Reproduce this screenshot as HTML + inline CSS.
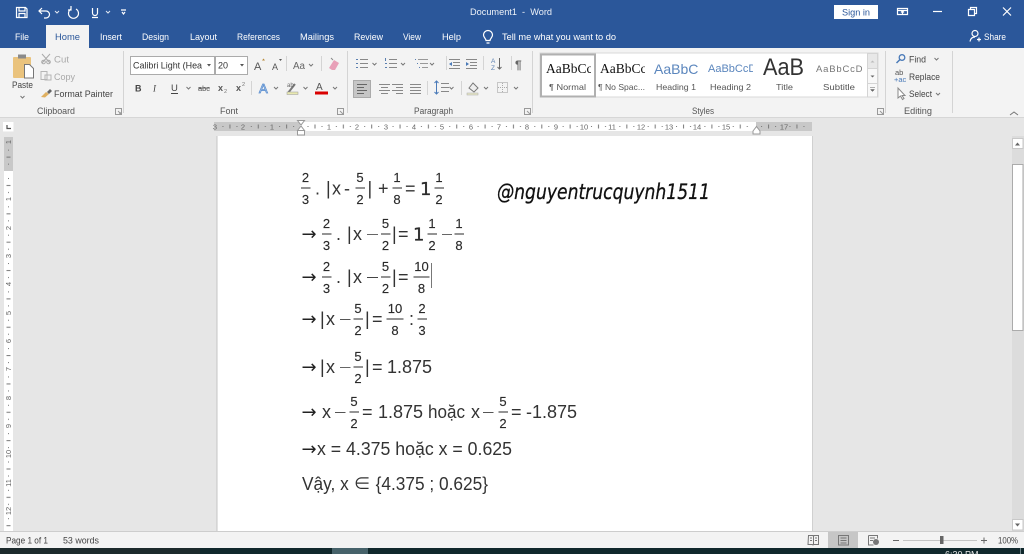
<!DOCTYPE html>
<html lang="en"><head><meta charset="utf-8"><title>Document1 - Word</title>
<style>
html,body{margin:0;padding:0;width:1024px;height:554px;overflow:hidden;background:#e6e6e6}
svg{display:block;position:absolute;left:0;top:0}
text{font-family:"Liberation Sans","Noto Sans CJK SC",sans-serif;white-space:pre}
.w{fill:#fff;font-size:9.5px}
.tb{fill:#eef2f8;font-size:9px}
.r{fill:#444;font-size:9px}
.g{fill:#a9a9a9;font-size:9px}
.l{fill:#555;font-size:9px}
.sn{fill:#555;font-size:8.5px}
.rn{fill:#666;font-size:7.5px;text-anchor:middle}
.m{fill:#333;font-size:18px}
.a{fill:#222;font-size:18px;font-family:"DejaVu Sans",sans-serif}
.o{fill:#2a2a2a;font-size:18px;font-family:"DejaVu Sans",sans-serif;stroke:#2a2a2a;stroke-width:.3}
.f{fill:#2a2a2a;font-size:13px;text-anchor:middle;stroke:#2a2a2a;stroke-width:.15}
.ic{fill:none;stroke:#666;stroke-width:1}
.ch{fill:none;stroke:#777;stroke-width:1}
.wi{fill:none;stroke:#fff;stroke-width:1.2}
.bar{fill:#2a2a2a}
</style></head><body>
<svg width="1024" height="554" viewBox="0 0 1024 554" xmlns="http://www.w3.org/2000/svg">
<defs>
<pattern id="hr" width="28.35" height="9" patternUnits="userSpaceOnUse" patternTransform="translate(300.5 122)">
<rect x="7" y="4" width="1" height="1" fill="#777"/><rect x="14" y="2.5" width="1" height="4" fill="#777"/><rect x="21" y="4" width="1" height="1" fill="#777"/>
</pattern>
<pattern id="vr" width="9" height="28.35" patternUnits="userSpaceOnUse" patternTransform="translate(4 171)">
<rect x="4" y="7" width="1" height="1" fill="#777"/><rect x="2.5" y="14" width="4" height="1" fill="#777"/><rect x="4" y="21" width="1" height="1" fill="#777"/>
</pattern>
</defs>

<!-- title bar -->
<rect width="1024" height="48" fill="#2b579a"/>
<path class="wi" d="M16.5 7.5h9l1.5 1.5v8.5h-10.500zM19 7.500v3.500h6v-3.500M19 17.500v-4h6v4"/>
<path class="wi" d="M42 8l-3 3 3 3M39 11h7a3.500 3.500 0 0 1 0 7h-2"/>
<path class="ch" style="stroke:#dfe6f1" d="M55 11l2 2 2-2M106 11l2 2 2-2"/>
<path class="wi" d="M71 9a5 5 0 1 0 5 0M71 6v4h-3"/>
<path class="wi" d="M92.500 8v5a2.500 2.500 0 0 0 5 0v-5M92 17.500h6"/>
<path class="wi" d="M121 10h5M122 12l1.500 2 1.500-2"/>
<text class="tb" x="470" y="15" textLength="82" lengthAdjust="spacingAndGlyphs">Document1  -  Word</text>
<rect x="834" y="5" width="44" height="14" fill="#fff"/>
<text x="842" y="15.500" font-size="9" fill="#2b579a" textLength="28" lengthAdjust="spacingAndGlyphs">Sign in</text>
<path class="wi" stroke-width="1" d="M897.500 8.500h10v6h-10zM897.500 10.500h10M902.500 11v3M901 12.500l1.500-1.500 1.500 1.500"/>
<path class="wi" d="M933 11.500h9"/>
<path class="wi" d="M968.500 9.500h6v6h-6zM970.500 9.500v-2h6v6h-2"/>
<path class="wi" d="M1003 7.500l8 8M1011 7.500l-8 8"/>

<!-- tabs -->
<rect x="46" y="25" width="43" height="23" fill="#f3f3f3"/>
<text class="w" x="15" y="40" textLength="14" lengthAdjust="spacingAndGlyphs">File</text>
<text x="55" y="40" font-size="9.500" fill="#2b579a" textLength="25" lengthAdjust="spacingAndGlyphs">Home</text>
<text class="w" x="100" y="40" textLength="22" lengthAdjust="spacingAndGlyphs">Insert</text>
<text class="w" x="142" y="40" textLength="27" lengthAdjust="spacingAndGlyphs">Design</text>
<text class="w" x="190" y="40" textLength="27" lengthAdjust="spacingAndGlyphs">Layout</text>
<text class="w" x="237" y="40" textLength="43" lengthAdjust="spacingAndGlyphs">References</text>
<text class="w" x="300" y="40" textLength="34" lengthAdjust="spacingAndGlyphs">Mailings</text>
<text class="w" x="354" y="40" textLength="29" lengthAdjust="spacingAndGlyphs">Review</text>
<text class="w" x="403" y="40" textLength="18" lengthAdjust="spacingAndGlyphs">View</text>
<text class="w" x="442" y="40" textLength="19" lengthAdjust="spacingAndGlyphs">Help</text>
<path class="wi" stroke-width="1" d="M486 40.500c0-2-2.500-3-2.500-5.500a4.500 4.500 0 0 1 9 0c0 2.500-2.500 3.500-2.500 5.500zM486.500 43h3"/>
<text class="w" x="502" y="40" textLength="114" lengthAdjust="spacingAndGlyphs">Tell me what you want to do</text>
<circle class="wi" cx="975" cy="33.500" r="3" stroke-width="1"/>
<path class="wi" stroke-width="1" d="M970 41.500c.5-3 2-4.500 5-4.500M977 39.500h4M979 37.500v4"/>
<text class="w" x="984" y="40" textLength="22" lengthAdjust="spacingAndGlyphs">Share</text>

<!-- ribbon -->
<rect y="48" width="1024" height="69" fill="#f3f3f3"/>
<rect y="117" width="1024" height="1" fill="#d6d6d6"/>
<g fill="#d4d4d4">
<rect x="123" y="51" width="1" height="62"/><rect x="347" y="51" width="1" height="62"/><rect x="532" y="51" width="1" height="62"/><rect x="885" y="51" width="1" height="62"/><rect x="952" y="51" width="1" height="62"/>
</g>
<!-- clipboard -->
<rect x="13" y="57" width="18" height="21" rx="1" fill="#eac37d"/>
<rect x="18" y="54.500" width="8" height="4" fill="#8a8a8a"/>
<path d="M24.500 64.500h5l4 4v9.500h-9z" fill="#fff" stroke="#777"/>
<text class="r" x="12" y="88" textLength="21" lengthAdjust="spacingAndGlyphs">Paste</text>
<path class="ch" d="M20.500 96l2 2 2-2"/>
<path d="M42 54l8 9M50 54l-8 9" stroke="#aaa" fill="none"/><circle cx="43.500" cy="62" r="1.800" fill="none" stroke="#aaa"/><circle cx="48.500" cy="62" r="1.800" fill="none" stroke="#aaa"/>
<text class="g" x="54" y="62.500" textLength="15" lengthAdjust="spacingAndGlyphs">Cut</text>
<path d="M41 71.500h6v8h-6zM45 75h6v5h-6z" fill="none" stroke="#b5b5b5"/>
<text class="g" x="54" y="80" textLength="21" lengthAdjust="spacingAndGlyphs">Copy</text>
<path d="M41 97l5-5 3 2-4 3.500z" fill="#e0b060"/><path d="M47 92l3-3 2 2-3 3z" fill="#666"/>
<text class="r" x="54" y="97" textLength="59" lengthAdjust="spacingAndGlyphs">Format Painter</text>
<text class="l" x="37" y="114" textLength="38" lengthAdjust="spacingAndGlyphs">Clipboard</text>
<path class="ic" d="M115.500 108.500h6v6h-6zM118 111l3 3M121 112v2h-2" style="stroke:#999"/>

<!-- font -->
<rect x="130.500" y="56.500" width="84" height="18" fill="#fff" stroke="#ababab"/>
<text x="133" y="68.500" font-size="9" fill="#333" textLength="69" lengthAdjust="spacingAndGlyphs">Calibri Light (Hea</text>
<path d="M207 64h4l-2 2.500z" fill="#555"/>
<rect x="215.500" y="56.500" width="32" height="18" fill="#fff" stroke="#ababab"/>
<text x="218" y="68.500" font-size="9" fill="#333">20</text>
<path d="M240 64h4l-2 2.500z" fill="#555"/>
<text x="254" y="70" font-size="11" fill="#555">A</text><path d="M262 60.500l1.500-2 1.500 2z" fill="#b88a3a"/>
<text x="272" y="70" font-size="9" fill="#555">A</text><path d="M279 59l1.500 2 1.500-2z" fill="#555"/>
<rect x="286" y="56" width="1" height="15" fill="#d4d4d4"/>
<text x="293" y="69" font-size="10" fill="#666" textLength="12" lengthAdjust="spacingAndGlyphs">Aa</text>
<path class="ch" d="M309 64l2 2 2-2"/>
<rect x="321" y="56" width="1" height="15" fill="#d4d4d4"/>
<path d="M329 68l5-8 5 3-4 7h-3z" fill="#e8a0b8"/><path d="M331 58l2 2" stroke="#888"/>
<text x="135" y="91.500" font-size="9" font-weight="bold" fill="#444">B</text>
<text x="153" y="91.500" font-size="9" font-style="italic" fill="#444" style="font-family:'Liberation Serif',serif">I</text>
<text x="171" y="91" font-size="9.500" fill="#444">U</text><rect x="171" y="93" width="7" height="1" fill="#444"/>
<path class="ch" d="M186.500 87l2 2 2-2"/>
<text x="198" y="91" font-size="7.500" fill="#555" textLength="12" lengthAdjust="spacingAndGlyphs">abc</text><rect x="198" y="87.500" width="12" height="1" fill="#666"/>
<text x="218" y="91" font-size="9" font-weight="bold" fill="#555">x</text><text x="224" y="93" font-size="5.500" fill="#777">2</text>
<text x="236" y="91" font-size="9" font-weight="bold" fill="#555">x</text><text x="242" y="86" font-size="5.500" fill="#777">2</text>
<rect x="251" y="81" width="1" height="14" fill="#d4d4d4"/>
<text x="259" y="93" font-size="13" fill="#dbe6f5" stroke="#5b8fd0" stroke-width=".8">A</text>
<path class="ch" d="M274 87l2 2 2-2"/>
<path d="M288 93l7-9" stroke="#777" stroke-width="2" fill="none"/><text x="287" y="87" font-size="6" fill="#666">ab</text>
<rect x="287" y="92" width="11" height="2.500" fill="#e8e8b0" stroke="#999" stroke-width=".5"/>
<path class="ch" d="M303.500 87l2 2 2-2"/>
<text x="316" y="90" font-size="10" fill="#555">A</text><rect x="315" y="91.500" width="13" height="3" fill="#d90000"/>
<path class="ch" d="M333 87l2 2 2-2"/>
<text class="l" x="220" y="114" textLength="18" lengthAdjust="spacingAndGlyphs">Font</text>
<path class="ic" d="M337.500 108.500h6v6h-6zM340 111l3 3" style="stroke:#999"/>

<!-- paragraph -->
<g class="ic">
<path d="M360 59.500h8M360 63.500h8M360 67.500h8" style="stroke:#888"/><path d="M356 59.500h2M356 63.500h2M356 67.500h2" style="stroke:#5a7fb0"/>
<path d="M389 59.500h8M389 63.500h8M389 67.500h8" style="stroke:#888"/><path d="M385.500 58v3M385 63.500h2M385 67.500h2" style="stroke:#5a7fb0"/>
<path d="M418 59.500h10M420 63.500h8M422 67.500h6" style="stroke:#999"/><path d="M415 59.500h1M417 63.500h1M419 67.500h1" style="stroke:#5a7fb0"/>
<path d="M449 59.500h11M453 62.500h7M453 65.500h7M449 68.500h11" style="stroke:#888"/>
<path d="M466 59.500h11M470 62.500h7M470 65.500h7M466 68.500h11" style="stroke:#888"/>
</g>
<path d="M452 62l-3 2 3 2z" fill="#4a7ab8"/><path d="M466 62l3 2-3 2z" fill="#4a7ab8"/>
<path class="ch" d="M372.500 63l2 2 2-2M401 63l2 2 2-2M430 63l2 2 2-2"/>
<rect x="446" y="56" width="1" height="14" fill="#d4d4d4"/><rect x="483" y="56" width="1" height="14" fill="#d4d4d4"/><rect x="511" y="56" width="1" height="14" fill="#d4d4d4"/>
<text x="491" y="63" font-size="6.500" fill="#5a7fb0">A</text><text x="491" y="70" font-size="6.500" fill="#5a7fb0">Z</text>
<path d="M499.500 58v11M497.500 67l2 2 2-2" fill="none" stroke="#666"/>
<text x="515" y="69" font-size="12" font-weight="bold" fill="#666">¶</text>
<rect x="353.500" y="80.500" width="17" height="17" fill="#c6c6c6" stroke="#aaa"/>
<path d="M357 84.500h10M357 87.500h7M357 90.500h10M357 93.500h7" stroke="#666" fill="none"/>
<path d="M379 84.500h11M381 87.500h7M379 90.500h11M381 93.500h7M392 84.500h11M396 87.500h7M392 90.500h11M396 93.500h7M410 84.500h11M410 87.500h11M410 90.500h11M410 93.500h11" stroke="#888" fill="none"/>
<rect x="427" y="81" width="1" height="14" fill="#d4d4d4"/><rect x="461" y="81" width="1" height="14" fill="#d4d4d4"/>
<path d="M436.500 81v13M434.500 83l2-2 2 2M434.500 92l2 2 2-2" fill="none" stroke="#4a7ab8"/>
<path d="M441 83.500h8M441 87.500h8M441 91.500h8" stroke="#888" fill="none"/>
<path class="ch" d="M449.500 87l2 2 2-2"/>
<path d="M469 88l4-5 5 5-4 4z" fill="#eee" stroke="#777"/><rect x="467" y="93" width="11" height="2" fill="#e8e8c8" stroke="#aaa" stroke-width=".5"/>
<path class="ch" d="M484 87l2 2 2-2M514 87l2 2 2-2"/>
<rect x="497.500" y="82.500" width="10" height="10" fill="none" stroke="#999" stroke-dasharray="1 1"/>
<path d="M502.500 83v10M498 87.500h10" stroke="#aaa" stroke-dasharray="1 1"/>
<text class="l" x="414" y="114" textLength="39" lengthAdjust="spacingAndGlyphs">Paragraph</text>
<path class="ic" d="M524.500 108.500h6v6h-6zM527 111l3 3" style="stroke:#999"/>

<!-- styles -->
<rect x="540" y="53" width="338" height="44" fill="#fff" stroke="#d8d8d8"/>
<rect x="541" y="54.500" width="54" height="42" fill="#fff" stroke="#b0b0b0" stroke-width="2"/>
<svg x="545" y="58" width="46" height="20"><text x="1" y="15" font-size="13.500" style="font-family:'Liberation Serif',serif" fill="#111">AaBbCc</text></svg>
<svg x="600" y="58" width="45" height="20"><text x="0" y="15" font-size="13.500" style="font-family:'Liberation Serif',serif" fill="#111">AaBbCc</text></svg>
<svg x="654" y="58" width="45" height="20"><text x="0" y="16" font-size="14" fill="#5b86bd">AaBbCc</text></svg>
<svg x="708" y="58" width="45" height="20"><text x="0" y="14" font-size="11" fill="#5b86bd">AaBbCcDd</text></svg>
<svg x="762" y="57" width="45" height="24"><text x="1" y="18" font-size="24" fill="#333" textLength="41" lengthAdjust="spacingAndGlyphs">AaB</text></svg>
<svg x="816" y="58" width="46" height="20"><text x="0" y="14" font-size="9.500" letter-spacing=".8" fill="#777">AaBbCcDd</text></svg>
<text class="sn" x="549" y="90" textLength="37" lengthAdjust="spacingAndGlyphs">¶ Normal</text>
<text class="sn" x="598" y="90" textLength="47" lengthAdjust="spacingAndGlyphs">¶ No Spac...</text>
<text class="sn" x="656" y="90" textLength="40" lengthAdjust="spacingAndGlyphs">Heading 1</text>
<text class="sn" x="710" y="90" textLength="41" lengthAdjust="spacingAndGlyphs">Heading 2</text>
<text class="sn" x="776" y="90" textLength="17" lengthAdjust="spacingAndGlyphs">Title</text>
<text class="sn" x="823" y="90" textLength="32" lengthAdjust="spacingAndGlyphs">Subtitle</text>
<rect x="867.500" y="53.500" width="10" height="15" fill="#e8e8e8" stroke="#d4d4d4"/>
<rect x="867.500" y="68.500" width="10" height="15" fill="#f8f8f8" stroke="#d4d4d4"/>
<rect x="867.500" y="83.500" width="10" height="13.500" fill="#f8f8f8" stroke="#d4d4d4"/>
<path d="M870.500 62.500l2-2 2 2z" fill="#bbb"/><path d="M870.500 75.500h4l-2 2z" fill="#666"/>
<path d="M870 87.500h5M870.500 89.500h4l-2 2z" fill="#666" stroke="#666" stroke-width=".5"/>
<text class="l" x="692" y="114" textLength="22" lengthAdjust="spacingAndGlyphs">Styles</text>
<path class="ic" d="M877.500 108.500h6v6h-6zM880 111l3 3" style="stroke:#999"/>

<!-- editing -->
<circle cx="902" cy="57.500" r="2.800" fill="none" stroke="#4a7ab8" stroke-width="1.300"/><path d="M900 59.500l-3.500 3.500" stroke="#4a7ab8" stroke-width="1.500"/>
<text class="r" x="909" y="62.500" textLength="17" lengthAdjust="spacingAndGlyphs">Find</text>
<path class="ch" d="M934.500 58l2 2 2-2"/>
<text x="895" y="75" font-size="7.500" fill="#555">ab</text><text x="894" y="82" font-size="7.500" fill="#4a7ab8">+ac</text>
<text class="r" x="909" y="80" textLength="31" lengthAdjust="spacingAndGlyphs">Replace</text>
<path d="M898 88v10l2.500-2 2 3.500 1.500-1-2-3h3z" fill="#fff" stroke="#888"/>
<text class="r" x="909" y="97" textLength="23" lengthAdjust="spacingAndGlyphs">Select</text>
<path class="ch" d="M936 93l2 2 2-2"/>
<text class="l" x="904" y="114" textLength="28" lengthAdjust="spacingAndGlyphs">Editing</text>
<path d="M1010 115l4-3 4 3" fill="none" stroke="#777"/>

<!-- doc area -->
<rect y="118" width="1024" height="414" fill="#e6e6e6"/>
<rect x="3" y="122" width="10.500" height="9.500" fill="#fff"/>
<path d="M7 125v3.500h4" fill="none" stroke="#555" stroke-width="1.200"/>

<!-- horizontal ruler -->
<rect x="214" y="122" width="86" height="9" fill="#c8c8c8"/>
<rect x="300" y="122" width="456" height="9" fill="#fff"/>
<rect x="756" y="122" width="56" height="9" fill="#c8c8c8"/>
<rect x="214" y="122" width="598" height="9" fill="url(#hr)"/>
<g>
<text class="rn" x="215" y="129.500">3</text><text class="rn" x="243" y="129.500">2</text><text class="rn" x="272" y="129.500">1</text>
<text class="rn" x="329" y="129.500">1</text><text class="rn" x="357" y="129.500">2</text><text class="rn" x="386" y="129.500">3</text><text class="rn" x="414" y="129.500">4</text><text class="rn" x="442" y="129.500">5</text><text class="rn" x="471" y="129.500">6</text><text class="rn" x="499" y="129.500">7</text><text class="rn" x="527" y="129.500">8</text><text class="rn" x="556" y="129.500">9</text><text class="rn" x="584" y="129.500">10</text><text class="rn" x="612" y="129.500">11</text><text class="rn" x="641" y="129.500">12</text><text class="rn" x="669" y="129.500">13</text><text class="rn" x="697" y="129.500">14</text><text class="rn" x="726" y="129.500">15</text><text class="rn" x="784" y="129.500">17</text>
</g>
<path d="M297.500 120.500h7l-3.500 4.500zM297.500 130.500l3.500-4.500 3.500 4.500zM297.500 130.500h7v4.500h-7z" fill="#fff" stroke="#999"/>
<path d="M753 131l3.500-4.500 3.500 4.500v3h-7z" fill="#fff" stroke="#999"/>

<!-- vertical ruler -->
<rect x="4" y="137" width="9" height="34" fill="#c8c8c8"/>
<rect x="4" y="171" width="9" height="360" fill="#fff"/>
<rect x="4" y="137" width="9" height="394" fill="url(#vr)"/>
<g>
<text class="rn" transform="translate(11 142) rotate(-90)">1</text>
<text class="rn" transform="translate(11 199) rotate(-90)">1</text><text class="rn" transform="translate(11 228) rotate(-90)">2</text><text class="rn" transform="translate(11 256) rotate(-90)">3</text><text class="rn" transform="translate(11 284) rotate(-90)">4</text><text class="rn" transform="translate(11 313) rotate(-90)">5</text><text class="rn" transform="translate(11 341) rotate(-90)">6</text><text class="rn" transform="translate(11 369) rotate(-90)">7</text><text class="rn" transform="translate(11 398) rotate(-90)">8</text><text class="rn" transform="translate(11 426) rotate(-90)">9</text><text class="rn" transform="translate(11 454) rotate(-90)">10</text><text class="rn" transform="translate(11 483) rotate(-90)">11</text><text class="rn" transform="translate(11 511) rotate(-90)">12</text>
</g>

<!-- page -->
<rect x="217" y="136" width="595" height="396" fill="#fff"/>
<rect x="216.500" y="136" width="1" height="396" fill="#c4c4c4"/>
<rect x="812" y="136" width="1" height="396" fill="#d0d0d0"/>

<!-- scrollbar -->
<rect x="1012" y="136" width="12" height="395" fill="#dcdcdc"/>
<rect x="1012.500" y="138.500" width="10.500" height="10" fill="#fff" stroke="#c8c8c8"/>
<path d="M1015 145.500l2.500-3 2.500 3z" fill="#666"/>
<rect x="1012.500" y="164.500" width="10.500" height="166" fill="#fff" stroke="#ababab"/>
<rect x="1012.500" y="519.500" width="10.500" height="10.500" fill="#fff" stroke="#c8c8c8"/>
<path d="M1015 523.500h5l-2.500 3z" fill="#666"/>

<!-- line 1 -->
<g>
<text class="f" x="305.500" y="182">2</text><rect class="bar" x="301" y="187.500" width="9.500" height="1"/><text class="f" x="305.500" y="204">3</text>
<text class="m" x="315" y="194.500">.</text>
<text class="m" x="326" y="194.500">|</text><text class="m" x="332" y="194.500">x</text><text class="m" x="344" y="194.500">-</text>
<text class="f" x="360" y="182">5</text><rect class="bar" x="355.500" y="187.500" width="9.500" height="1"/><text class="f" x="360" y="204">2</text>
<text class="m" x="367.500" y="194.500">|</text><text class="m" x="378" y="194.500">+</text>
<text class="f" x="397" y="182">1</text><rect class="bar" x="392.500" y="187.500" width="9.500" height="1"/><text class="f" x="397" y="204">8</text>
<text class="m" x="405" y="194.500">=</text>
<text class="o" x="420" y="195">1</text>
<text class="f" x="439" y="182">1</text><rect class="bar" x="434.500" y="187.500" width="9.500" height="1"/><text class="f" x="439" y="204">2</text>
</g>
<!-- handwriting -->
<text x="497" y="199" font-size="21" font-style="italic" fill="#111" stroke="#111" stroke-width=".3" textLength="213" lengthAdjust="spacingAndGlyphs" style="font-family:'DejaVu Sans',sans-serif">@nguyentrucquynh1511</text>

<!-- line 2 -->
<g>
<text class="a" x="301.500" y="240">→</text>
<text class="f" x="326.500" y="228">2</text><rect class="bar" x="322" y="233.500" width="9.500" height="1"/><text class="f" x="326.500" y="250">3</text>
<text class="m" x="336" y="240">.</text>
<text class="m" x="347" y="240">|</text><text class="m" x="353" y="240">x</text>
<rect x="367" y="234" width="11" height="1" fill="#666"/>
<text class="f" x="385.500" y="228">5</text><rect class="bar" x="381" y="233.500" width="9.500" height="1"/><text class="f" x="385.500" y="250">2</text>
<text class="m" x="392" y="240">|</text><text class="m" x="398" y="240">=</text>
<text class="o" x="413" y="240.500">1</text>
<text class="f" x="432" y="228">1</text><rect class="bar" x="427.500" y="233.500" width="9.500" height="1"/><text class="f" x="432" y="250">2</text>
<rect x="442" y="234" width="10" height="1" fill="#666"/>
<text class="f" x="459" y="228">1</text><rect class="bar" x="454.500" y="233.500" width="9.500" height="1"/><text class="f" x="459" y="250">8</text>
</g>

<!-- line 3 -->
<g>
<text class="a" x="301.500" y="283">→</text>
<text class="f" x="326.500" y="271">2</text><rect class="bar" x="322" y="276.500" width="9.500" height="1"/><text class="f" x="326.500" y="293">3</text>
<text class="m" x="336" y="283">.</text>
<text class="m" x="347" y="283">|</text><text class="m" x="353" y="283">x</text>
<rect x="367" y="277" width="11" height="1" fill="#444"/>
<text class="f" x="385.500" y="271">5</text><rect class="bar" x="381" y="276.500" width="9.500" height="1"/><text class="f" x="385.500" y="293">2</text>
<text class="m" x="392" y="283">|</text><text class="m" x="398" y="283">=</text>
<text class="f" x="421.500" y="271">10</text><rect class="bar" x="413.500" y="276.500" width="16" height="1"/><text class="f" x="421.500" y="293">8</text>
<rect x="431" y="263" width="1" height="25" fill="#777"/>
</g>

<!-- line 4 -->
<g>
<text class="a" x="301.500" y="325">→</text>
<text class="m" x="320" y="325">|</text><text class="m" x="326" y="325">x</text>
<rect x="340" y="319" width="10.500" height="1" fill="#555"/>
<text class="f" x="358" y="313">5</text><rect class="bar" x="353.500" y="318.500" width="9.500" height="1"/><text class="f" x="358" y="335">2</text>
<text class="m" x="365" y="325">|</text><text class="m" x="372" y="325">=</text>
<text class="f" x="395" y="313">10</text><rect class="bar" x="386.500" y="318.500" width="17" height="1"/><text class="f" x="395" y="335">8</text>
<text class="m" x="409" y="325">:</text>
<text class="f" x="422" y="313">2</text><rect class="bar" x="417.500" y="318.500" width="9.500" height="1"/><text class="f" x="422" y="335">3</text>
</g>

<!-- line 5 -->
<g>
<text class="a" x="301.500" y="373">→</text>
<text class="m" x="320" y="373">|</text><text class="m" x="326" y="373">x</text>
<rect x="340" y="367" width="10.500" height="1" fill="#666"/>
<text class="f" x="358" y="361">5</text><rect class="bar" x="353.500" y="366.500" width="9.500" height="1"/><text class="f" x="358" y="383">2</text>
<text class="m" x="365" y="373">|</text><text class="m" x="372" y="373">=</text>
<text class="m" x="387" y="373">1.875</text>
</g>

<!-- line 6 -->
<g>
<text class="a" x="301.500" y="418">→</text>
<text class="m" x="322" y="418">x</text>
<rect x="335" y="412" width="10.500" height="1" fill="#555"/>
<text class="f" x="354" y="406">5</text><rect class="bar" x="349.500" y="411.500" width="9.500" height="1"/><text class="f" x="354" y="428">2</text>
<text class="m" x="362" y="418">=</text>
<text class="m" x="378" y="418">1.875</text>
<text class="m" x="428" y="418" textLength="37" lengthAdjust="spacingAndGlyphs">hoặc</text>
<text class="m" x="471" y="418">x</text>
<rect x="483" y="412" width="10.500" height="1" fill="#555"/>
<text class="f" x="503" y="406">5</text><rect class="bar" x="498.500" y="411.500" width="9.500" height="1"/><text class="f" x="503" y="428">2</text>
<text class="m" x="511" y="418">=</text>
<text class="m" x="526" y="418">-1.875</text>
</g>

<!-- line 7, 8 -->
<text class="a" x="301.500" y="455">→</text>
<text class="m" x="317" y="455" textLength="195" lengthAdjust="spacingAndGlyphs">x = 4.375 hoặc x = 0.625</text>
<text class="m" x="302" y="490" textLength="186" lengthAdjust="spacingAndGlyphs">Vậy, x ∈ {4.375 ; 0.625}</text>

<!-- status bar -->
<rect y="531" width="1024" height="1" fill="#cdcdcd"/>
<rect y="532" width="1024" height="16" fill="#f3f3f3"/>
<text class="r" x="6" y="543.500" font-size="8.500" textLength="42" lengthAdjust="spacingAndGlyphs">Page 1 of 1</text>
<text class="r" x="63" y="543.500" font-size="8.500" textLength="36" lengthAdjust="spacingAndGlyphs">53 words</text>
<path d="M808.500 535.500h4.500l.5 1 .5-1h4.500v9h-5l-.5 .5-.5-.5h-4.500zM813.500 536.500v8M810 538h2M810 540.500h2M815 538h2M815 540.500h2" fill="none" stroke="#777"/>
<rect x="828" y="532" width="30" height="16" fill="#c6c6c6"/>
<path d="M838.500 535.500h10v9.500h-10zM840.500 538h6M840.500 540.500h6M840.500 543h6" fill="none" stroke="#777"/>
<path d="M868.500 535.500h9v3M868.500 535.500v9.500h5M870 538h5M870 540.500h3" fill="none" stroke="#777"/><circle cx="876" cy="542" r="3" fill="#777"/>
<rect x="893" y="540" width="6" height="1" fill="#666"/>
<rect x="903" y="540" width="74" height="1" fill="#c4c4c4"/>
<rect x="940" y="536" width="3.500" height="8" fill="#666"/>
<path d="M981 540.500h6M984 537.500v6" stroke="#666" fill="none"/>
<text class="r" x="998" y="543.500" font-size="8.500" textLength="20" lengthAdjust="spacingAndGlyphs">100%</text>

<!-- taskbar -->
<rect y="548" width="1024" height="6" fill="#10282c"/>
<rect x="0" y="548" width="200" height="6" fill="#1c2a2c"/>
<rect x="332" y="548" width="36" height="6" fill="#46626a"/>
<text x="945" y="557.500" font-size="9" fill="#e8e8e8">6:30 PM</text>
<rect x="1020" y="548" width="1" height="6" fill="#70858a"/>
</svg>
</body></html>
